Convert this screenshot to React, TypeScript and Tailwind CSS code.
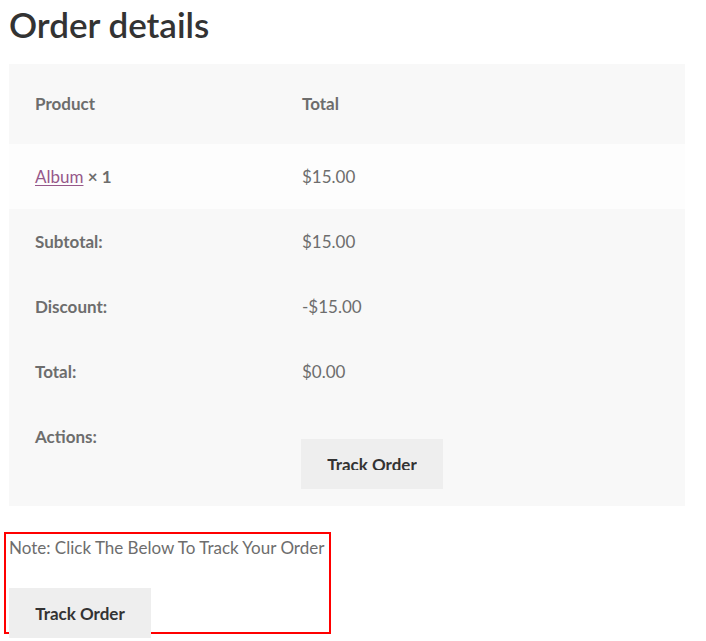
import React from 'react';

const ROWS = [
  { label: 'Subtotal:', value: '$15.00' },
  { label: 'Discount:', value: '-$15.00' },
  { label: 'Total:', value: '$0.00' },
];

function TrackButton({ clipped = false }: { clipped?: boolean }) {
  return (
    <button
      type="button"
      className="bg-[#eeeeee] text-[#333333] font-bold text-[17px] w-[142px] h-[50px] flex items-start justify-center"
    >
      {clipped ? (
        <span className="block mt-[13px] h-[18px] overflow-hidden leading-[26px]">Track Order</span>
      ) : (
        <span className="block mt-[13px] leading-[26px]">Track Order</span>
      )}
    </button>
  );
}

export default function App() {
  return (
    <div
      className="bg-white w-[706px] h-[641px] overflow-hidden text-[#6d6d6d] text-[17px]"
      style={{ fontFamily: 'Lato, "Liberation Sans", sans-serif' }}
    >
      <h1 className="pl-[9px] pt-[1px] text-[35px] leading-[46px] font-semibold text-[#333333]">
        Order details
      </h1>

      <table className="ml-[9px] mt-[17px] w-[676px] border-collapse">
        <thead>
          <tr className="bg-[#f8f8f8] h-[80px]">
            <th className="w-[293px] pl-[26px] text-left font-bold leading-[26px]">Product</th>
            <th className="text-left font-bold leading-[26px]">Total</th>
          </tr>
        </thead>
        <tbody>
          <tr className="bg-[#fdfdfd] h-[65px]">
            <td className="pl-[26px] leading-[26px]">
              <a href="#" className="text-[#96588a] underline underline-offset-2">
                Album
              </a>{' '}
              <strong className="font-bold">× 1</strong>
            </td>
            <td className="leading-[26px]">$15.00</td>
          </tr>
          {ROWS.map(row => (
            <tr key={row.label} className="bg-[#f8f8f8] h-[65px]">
              <th className="pl-[26px] text-left font-bold leading-[26px]">{row.label}</th>
              <td className="leading-[26px]">{row.value}</td>
            </tr>
          ))}
          <tr className="bg-[#f8f8f8]">
            <th className="pl-[26px] pt-[20px] align-top text-left font-bold leading-[26px]">Actions:</th>
            <td className="pt-[35px] pb-[17px] align-top">
              <div className="-ml-[1px]">
                <TrackButton clipped />
              </div>
            </td>
          </tr>
        </tbody>
      </table>

      <div className="ml-[4px] mt-[26px] w-[327px] h-[102px] border-2 border-[#ff0000]">
        <p className="pl-[3px] pt-[1px] leading-[26px]">Note: Click The Below To Track Your Order</p>
        <div className="ml-[3px] mt-[27px]">
          <TrackButton />
        </div>
      </div>
    </div>
  );
}
